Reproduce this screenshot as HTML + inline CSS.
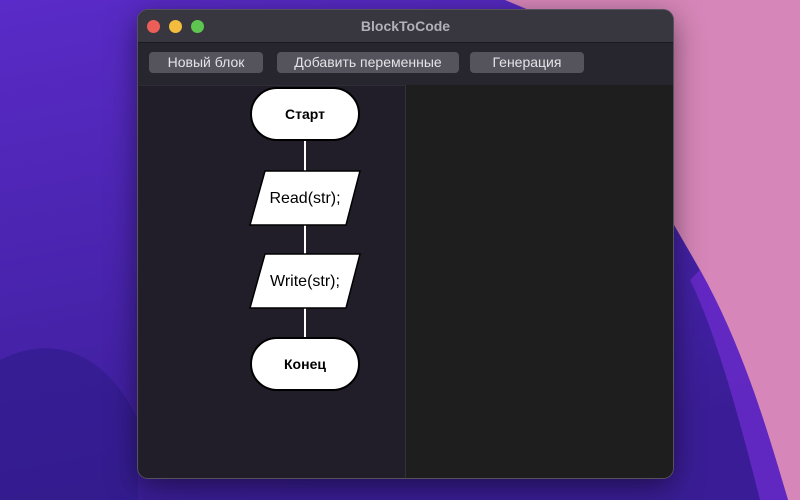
<!DOCTYPE html>
<html><head><meta charset="utf-8"><style>
html,body{margin:0;padding:0;width:800px;height:500px;overflow:hidden;font-family:"Liberation Sans",sans-serif}
.bg{position:absolute;left:0;top:0}
.win{position:absolute;left:138px;top:10px;width:535px;height:468px;border-radius:10px;background:#24222c;overflow:hidden;box-shadow:0 0 0 1px #55525c,0 8px 30px rgba(0,0,0,.5)}
.title{position:absolute;left:0;top:0;width:535px;height:32px;background:#38363e;border-bottom:1px solid #1a1a1e;text-align:center;line-height:32px;color:#b3b1b8;font-weight:bold;font-size:14px}
.dot{position:absolute;top:10px;width:13px;height:13px;border-radius:50%}
.tb{position:absolute;top:33px;left:0;width:535px;height:42px;background:#27252e}
.btn{position:absolute;top:9px;height:21px;background:#55535c;border-radius:4px;color:#e4e3e8;font-size:14px;text-align:center;line-height:21px}
.left{position:absolute;left:1px;top:75px;width:266px;height:393px;background:#211e29;border-right:1px solid #333139;border-top:1px solid #2e2c35}
.right{position:absolute;left:268px;top:75px;width:267px;height:393px;background:#1e1e1e}
</style></head><body>
<svg class="bg" width="800" height="500">
<defs><linearGradient id="p" x1="0" y1="0" x2="0.3" y2="1"><stop offset="0" stop-color="#5a2bc8"/><stop offset="1" stop-color="#3a1d96"/></linearGradient></defs>
<rect width="800" height="500" fill="url(#p)"/>
<path d="M0 360 C60 330 110 360 138 420 L138 500 L0 500Z" fill="#2f1a88" opacity=".6"/>
<path d="M505 0 L800 0 L800 500 L788 500 C770 440 745 350 700 270 C680 235 660 200 640 170 L600 40 Z" fill="#d686b8"/>
<path d="M700 270 C745 350 770 440 788 500 L760 500 C740 420 715 330 690 280Z" fill="#6b2bcc" opacity=".8"/>
</svg>
<div class="win">
<div class="title">BlockToCode
<div class="dot" style="left:9px;background:#ec5f58"></div>
<div class="dot" style="left:31px;background:#f3bc3f"></div>
<div class="dot" style="left:53px;background:#5fc551"></div>
</div>
<div class="tb">
<div class="btn" style="left:11px;width:114px">Новый блок</div>
<div class="btn" style="left:139px;width:182px">Добавить переменные</div>
<div class="btn" style="left:332px;width:114px">Генерация</div>
</div>
<div class="left"></div>
<div class="right"></div>
</div>
<svg class="bg" width="800" height="500" style="font-family:'Liberation Sans',sans-serif">
<line x1="305" y1="140" x2="305" y2="338" stroke="#fff" stroke-width="2"/>
<rect x="251" y="88" width="108" height="52" rx="26" fill="#fff" stroke="#000" stroke-width="2"/>
<text x="305" y="119" text-anchor="middle" font-size="14" font-weight="bold">Старт</text>
<polygon points="265,171 360,171 346,225 250,225" fill="#fff" stroke="#000" stroke-width="1.5"/>
<text x="305" y="203" text-anchor="middle" font-size="16">Read(str);</text>
<polygon points="265,254 360,254 346,308 250,308" fill="#fff" stroke="#000" stroke-width="1.5"/>
<text x="305" y="286" text-anchor="middle" font-size="16">Write(str);</text>
<rect x="251" y="338" width="108" height="52" rx="26" fill="#fff" stroke="#000" stroke-width="2"/>
<text x="305" y="369" text-anchor="middle" font-size="14" font-weight="bold">Конец</text>
</svg>
</body></html>
